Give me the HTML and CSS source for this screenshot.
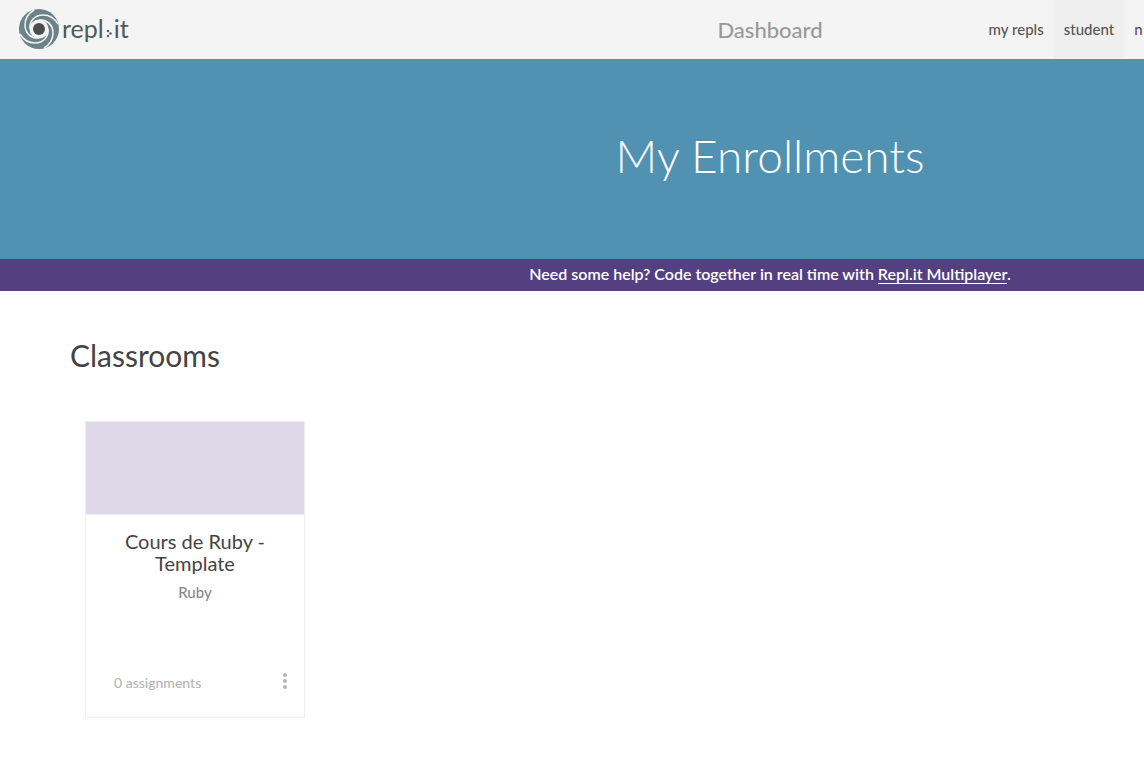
FILE: index.html
```html
<!DOCTYPE html>
<html lang="en">
<head>
<meta charset="utf-8">
<title>Dashboard</title>
<link rel="stylesheet" href="styles.css">
</head>
<body>
<div class="page">
  <header class="topbar">
    <a class="brand" href="#" aria-label="repl.it">
      <svg class="brand-mark" viewBox="-20 -20 40 40" aria-hidden="true">
        <circle r="20" fill="#6b8289"/>
        <circle r="9.500" fill="#f4f4f4"/>
        <g fill="none" stroke="#f4f4f4" stroke-width="1.500">
          <path id="swirl" d="M-9 0C-10-8-4-14 4-14C11-14 16-10 19-5"/>
          <use href="#swirl" transform="rotate(90)"/>
          <use href="#swirl" transform="rotate(180)"/>
          <use href="#swirl" transform="rotate(270)"/>
        </g>
        <circle r="6" fill="#4b4e4d"/>
      </svg>
      <span class="brand-name">repl<svg class="brand-dots" viewBox="0 0 6 9" aria-hidden="true"><g fill="#50585a"><circle cx="2" cy="2" r="1.2"/><circle cx="4.5" cy="4.5" r="1.2"/><circle cx="2" cy="7" r="1.2"/></g></svg>it</span>
    </a>
    <span class="section-name">Dashboard</span>
    <nav class="nav">
      <a href="#">my repls</a>
      <a class="active" href="#">student</a>
      <a href="#">n</a>
    </nav>
  </header>
  <section class="hero"><h1>My Enrollments</h1></section>
  <p class="notice">Need some help? Code together in real time with <a href="#">Repl.it Multiplayer</a>.</p>
  <main class="content">
    <h2>Classrooms</h2>
    <div class="cards">
      <article class="card">
        <div class="cover"></div>
        <div class="details">
          <h3>Cours de Ruby - Template</h3>
          <p class="language">Ruby</p>
          <footer class="card-footer">
            <span>0 assignments</span>
            <button class="more" type="button" aria-label="More options">
              <svg viewBox="0 0 4 18" aria-hidden="true"><circle cx="2" cy="3" r="2"/><circle cx="2" cy="9" r="2"/><circle cx="2" cy="15" r="2"/></svg>
            </button>
          </footer>
        </div>
      </article>
    </div>
  </main>
</div>
</body>
</html>
```
FILE: styles.css
```css
* { box-sizing: border-box; }
html { overflow-x: hidden; }
body {
  margin: 0;
  overflow-x: hidden;
  background: #fff;
  color: #444;
  font-family: Lato, "Liberation Sans", sans-serif;
}
h1, h2, h3, p { margin: 0; }
a { color: inherit; text-decoration: none; }
.page { min-width: 1540px; }
.topbar {
  display: grid;
  grid-template-columns: 1fr auto 1fr;
  align-items: center;
  height: 59px;
  padding-bottom: 1px;
  background: #f4f4f4;
}
.brand { display: flex; align-items: center; gap: 3px; padding-left: 19px; }
.brand-mark { width: 40px; height: 40px; }
.brand-name { display: flex; padding-bottom: 2px; font-size: 25px; line-height: 36px; font-weight: 400; color: #50585a; }
.brand-dots { width: 6px; height: 9px; margin: 19px 2px 0; }
.section-name { font-size: 22px; font-weight: 500; color: #999; }
.nav { display: flex; align-self: stretch; padding-left: 156px; font-size: 15px; font-weight: 500; color: #555; }
.nav a { display: flex; align-items: center; padding: 0 10px; white-space: nowrap; }
.nav .active { background: #efefef; }
.hero {
  display: grid;
  place-items: center;
  height: 200px;
  padding-bottom: 6px;
  background: #5191b2;
  color: #fff;
}
.hero h1 { font-size: 46px; line-height: 60px; font-weight: 300; }
.notice {
  padding-bottom: 2px;
  background: #543f81;
  color: #fff;
  font-size: 16px;
  line-height: 30px;
  font-weight: 600;
  text-align: center;
}
.notice a { border-bottom: 1px solid; }
.content { padding: 46px 70px; }
.content h2 { font-size: 30px; line-height: 36px; font-weight: 400; }
.cards { display: flex; flex-wrap: wrap; padding: 48px 15px 0; }
.card {
  display: flex;
  flex-direction: column;
  width: 220px;
  min-height: 297px;
  border: 1px solid #eee;
  text-align: center;
}
.cover { height: 93px; background: #ddd7e8; border-bottom: 1px solid #eee; }
.details { display: flex; flex: 1; flex-direction: column; padding: 15px 17px 23px 28px; }
.card h3 { padding: 0 11px 0 0; font-size: 20px; line-height: 22px; font-weight: 400; }
.language { padding: 6px 11px 0 0; font-size: 15px; line-height: 24px; font-weight: 500; color: #888; }
.card-footer {
  display: flex;
  align-items: center;
  justify-content: space-between;
  margin-top: auto;
  color: #b5b5b5;
  font-size: 14px;
  line-height: 20px;
  font-weight: 500;
}
.more { display: flex; padding: 0 0 4px; border: 0; background: none; cursor: pointer; }
.more svg { width: 4px; height: 18px; fill: #b5b5b5; }
```
